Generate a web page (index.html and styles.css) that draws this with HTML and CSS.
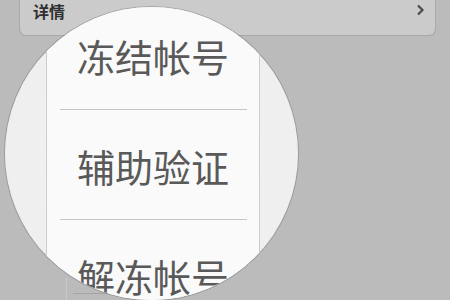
FILE: index.html
```html
<!DOCTYPE html>
<html lang="zh-CN">
<head>
<meta charset="utf-8">
<title>放大镜菜单</title>
<link rel="stylesheet" href="styles.css">
</head>
<body>
  <div class="card">
    <span class="card-title">详情</span>
    <svg class="chev" width="9" height="12" viewBox="0 0 9 12"><path d="M2 1.5 L6.5 6 L2 10.5" fill="none" stroke="#4a4a4a" stroke-width="2.2"/></svg>
  </div>
  <div class="under-menu"><div class="under-divider"></div></div>

  <div class="lens">
    <div class="panel">
      <div class="row">冻结帐号</div>
      <div class="divider"></div>
      <div class="row">辅助验证</div>
      <div class="divider"></div>
      <div class="row">解冻帐号</div>
    </div>
  </div>
</body>
</html>
```

FILE: styles.css
```css
html, body {
  margin: 0;
  padding: 0;
}
body {
  width: 450px;
  height: 300px;
  overflow: hidden;
  background: #bbbbbb;
  font-family: "Noto Sans CJK SC", "Noto Sans", sans-serif;
  position: relative;
}
.card {
  box-sizing: border-box;
  margin-left: 19px;
  width: 417px;
  height: 36px;
  background: #cbcbcb;
  border: 1px solid #a9a9a9;
  border-top: none;
  border-radius: 0 0 7px 7px;
  display: flex;
  justify-content: space-between;
  align-items: flex-start;
  padding: 0 10px 0 13px;
}
.card-title {
  font-size: 16px;
  font-weight: 700;
  line-height: 20px;
  padding-top: 1px;
  color: #303030;
}
.chev {
  margin-top: 4px;
}
.under-menu {
  margin-left: 66px;
  margin-top: 242px;
  height: 22px;
  border-left: 1px solid #c9c9c9;
  padding-top: 15px;
  box-sizing: border-box;
}
.under-divider {
  margin-left: 6px;
  width: 120px;
  height: 1px;
  background: #a5a5a5;
}
.lens {
  position: absolute;
  left: 5px;
  top: 7px;
  width: 293px;
  height: 293px;
  border-radius: 50%;
  overflow: hidden;
  background: radial-gradient(circle at 50% 50%, #f3f3f3 0%, #efefef 70%, #e2e2e2 100%);
  box-shadow: 0 0 0 1px rgba(0,0,0,0.18);
}
.panel {
  box-sizing: border-box;
  margin-left: 41px;
  margin-top: -7px;
  width: 214px;
  background: #fafafa;
  border-left: 1px solid #cdcdcd;
  border-right: 1px solid #cdcdcd;
  display: flex;
  flex-direction: column;
}
.row {
  height: 110px;
  display: flex;
  align-items: center;
  justify-content: center;
  font-size: 38px;
  font-weight: 400;
  color: #595959;
  letter-spacing: 0;
}
.divider {
  height: 1px;
  margin: -1px 12px 0 13px;
  background: #c6c6c6;
}
```
